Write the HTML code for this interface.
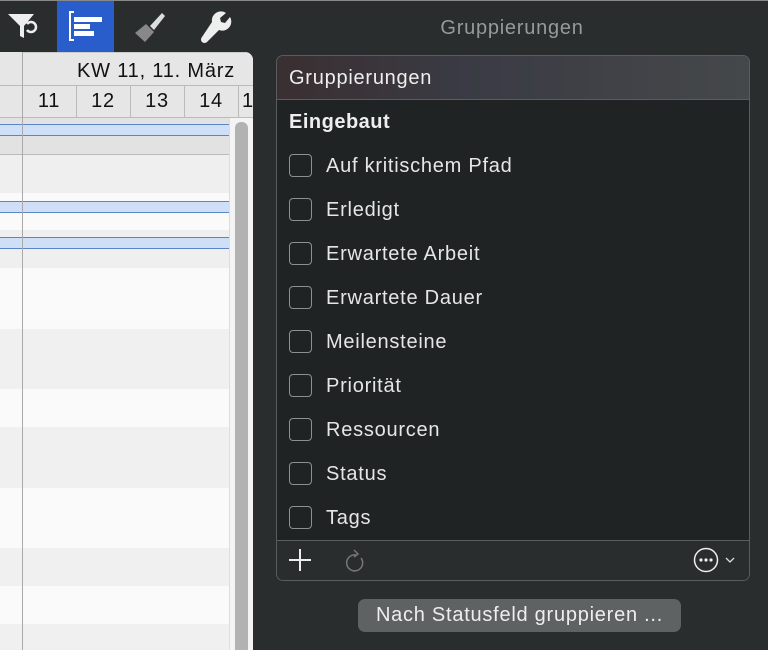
<!DOCTYPE html>
<html><head><meta charset="utf-8"><style>
*{margin:0;padding:0;box-sizing:border-box}
body{width:768px;height:650px;overflow:hidden;background:#292d2e;font-family:"Liberation Sans",Helvetica,sans-serif;position:relative;letter-spacing:0.75px}
.a{position:absolute}
.gantt{left:0;top:52px;width:253px;height:598px;background:#fafafa;border-top-right-radius:8px;overflow:hidden}
.band{position:absolute;left:0;width:229px}
.bar{position:absolute;left:0;width:229px;height:12px;background:#cfdff7;border-top:1px solid #5a86c4;border-bottom:1px solid #5a86c4}
.item{position:absolute;left:289px;height:24px;color:#e6e6e6;font-size:20px;line-height:24px}
.item i{position:absolute;left:0;top:0;width:23px;height:23px;border:1.5px solid #8d8f90;border-radius:4px}
.item span{position:absolute;left:37px;white-space:nowrap}
</style></head><body>
<div class="a" style="left:0;top:0;width:768px;height:1px;background:#888"></div>
<svg class="a" style="left:0;top:0" width="260" height="52">
 <path d="M8 14 H34 L24 26 V38 L20 36 V26 Z" fill="#eee"/>
 <path d="M27 24 a5 5 0 1 1 0 6" fill="none" stroke="#eee" stroke-width="2.5"/>
 <rect x="57" y="1" width="57" height="51" fill="#2a5dcc"/>
 <path d="M74 12 H70 V40 H74" fill="none" stroke="#fff" stroke-width="2"/>
 <rect x="74" y="17" width="28" height="5" fill="#fff"/>
 <rect x="74" y="24" width="16" height="5" fill="#fff"/>
 <rect x="74" y="31" width="20" height="5" fill="#fff"/>
 <path d="M150 26 L162 13 L165 16 L154 30 Z" fill="#ddd"/>
 <path d="M135 33 L146 24 L154 32 L145 42 Z" fill="#888"/>
 <path d="M212 22 a9 9 0 0 1 14 -9 l-6 5 l1 4 l4 1 l5 -6 a9 9 0 0 1 -11 13 l-12 12 a3 3 0 0 1 -5 -5 z" fill="#eee"/>
</svg>
<div class="a" style="left:430px;top:17px;width:164px;color:#979a9b;font-size:20px;text-align:center">Gruppierungen</div>
<div class="a gantt">
 <div class="band" style="top:0;height:66px;width:253px;background:#e6e6e6"></div>
 <div class="a" style="left:22px;top:0;width:231px;height:1px;background:#ccc"></div>
 <div class="a" style="left:0;top:33px;width:253px;height:1px;background:#bbb"></div>
 <div class="a" style="left:22px;top:8px;width:213px;text-align:right;font-size:20px;color:#111;white-space:nowrap;letter-spacing:0.8px">KW 11, 11. März</div>
 <div class="a" style="left:22px;top:38px;width:54px;text-align:center;font-size:20px;color:#111">11</div>
 <div class="a" style="left:76px;top:38px;width:54px;text-align:center;font-size:20px;color:#111">12</div>
 <div class="a" style="left:130px;top:38px;width:54px;text-align:center;font-size:20px;color:#111">13</div>
 <div class="a" style="left:184px;top:38px;width:54px;text-align:center;font-size:20px;color:#111">14</div>
 <div class="a" style="left:242px;top:38px;font-size:20px;color:#111">1</div>
 <div class="a" style="left:76px;top:34px;width:1px;height:32px;background:#bbb"></div>
 <div class="a" style="left:130px;top:34px;width:1px;height:32px;background:#bbb"></div>
 <div class="a" style="left:184px;top:34px;width:1px;height:32px;background:#bbb"></div>
 <div class="a" style="left:238px;top:34px;width:1px;height:32px;background:#bbb"></div>
 <div class="a" style="left:0;top:65px;width:253px;height:1px;background:#bbb"></div>
 <div class="band" style="top:66px;height:37px;background:#e2e2e2"></div>
 <div class="band" style="top:102px;height:1px;background:#bbb"></div>
 <div class="band" style="top:103px;height:38px;background:#efefef"></div>
 <div class="band" style="top:178px;height:38px;background:#efefef"></div>
 <div class="band" style="top:277px;height:60px;background:#f0f0f0"></div>
 <div class="band" style="top:375px;height:61px;background:#f0f0f0"></div>
 <div class="band" style="top:496px;height:38px;background:#f0f0f0"></div>
 <div class="band" style="top:572px;height:30px;background:#f0f0f0"></div>
 <div class="bar" style="top:72px"></div>
 <div class="bar" style="top:149px"></div>
 <div class="bar" style="top:185px"></div>
 <div class="a" style="left:22px;top:0;width:1px;height:598px;background:#aaa"></div>
 <div class="a" style="left:229px;top:66px;width:24px;height:540px;background:#f4f4f4;border-left:1px solid #ddd"></div>
 <div class="a" style="left:235px;top:70px;width:13px;height:540px;background:#b2b2b2;border-radius:6px"></div>
</div>
<div class="a" style="left:276px;top:55px;width:474px;height:526px;border:1px solid #5a5d5e;border-radius:7px;background:#1f2324;overflow:hidden">
 <div class="a" style="left:0;top:0;width:472px;height:44px;background:linear-gradient(90deg,#3a2f31,#3a3b44 40%,#45484a);border-bottom:1px solid #5a5d5e"></div>
 <div class="a" style="left:12px;top:11px;color:#eee;font-size:20px">Gruppierungen</div>
 <div class="a" style="left:0;top:484px;width:472px;height:42px;background:#292d2e;border-top:1px solid #5a5d5e"></div>
</div>
<div class="a" style="left:289px;top:111px;color:#eee;font-size:20px;font-weight:bold;letter-spacing:0.5px">Eingebaut</div>
<div class="item" style="top:154px"><i></i><span>Auf kritischem Pfad</span></div>
<div class="item" style="top:198px"><i></i><span>Erledigt</span></div>
<div class="item" style="top:242px"><i></i><span>Erwartete Arbeit</span></div>
<div class="item" style="top:286px"><i></i><span>Erwartete Dauer</span></div>
<div class="item" style="top:330px"><i></i><span>Meilensteine</span></div>
<div class="item" style="top:374px"><i></i><span>Priorität</span></div>
<div class="item" style="top:418px"><i></i><span>Ressourcen</span></div>
<div class="item" style="top:462px"><i></i><span>Status</span></div>
<div class="item" style="top:506px"><i></i><span>Tags</span></div>
<svg class="a" style="left:276px;top:540px" width="474" height="40">
 <path d="M24 9 V31 M13 20 H35" stroke="#eee" stroke-width="2"/>
 <path d="M80 15 a8 8 0 1 0 5 3" fill="none" stroke="#777" stroke-width="1.5"/>
 <path d="M78 10 L82 14 L78 17" fill="none" stroke="#777" stroke-width="1.5"/>
 <circle cx="430" cy="20" r="11.5" fill="none" stroke="#eee" stroke-width="1.5"/>
 <circle cx="425" cy="20" r="1.6" fill="#eee"/><circle cx="430" cy="20" r="1.6" fill="#eee"/><circle cx="435" cy="20" r="1.6" fill="#eee"/>
 <path d="M450 18 L454 22 L458 18" fill="none" stroke="#ddd" stroke-width="1.3"/>
</svg>
<div class="a" style="left:358px;top:599px;width:323px;height:33px;background:#5f6263;border-radius:7px;color:#eee;font-size:20px;text-align:center;line-height:32px;white-space:nowrap">Nach Statusfeld gruppieren ...</div>
</body></html>
